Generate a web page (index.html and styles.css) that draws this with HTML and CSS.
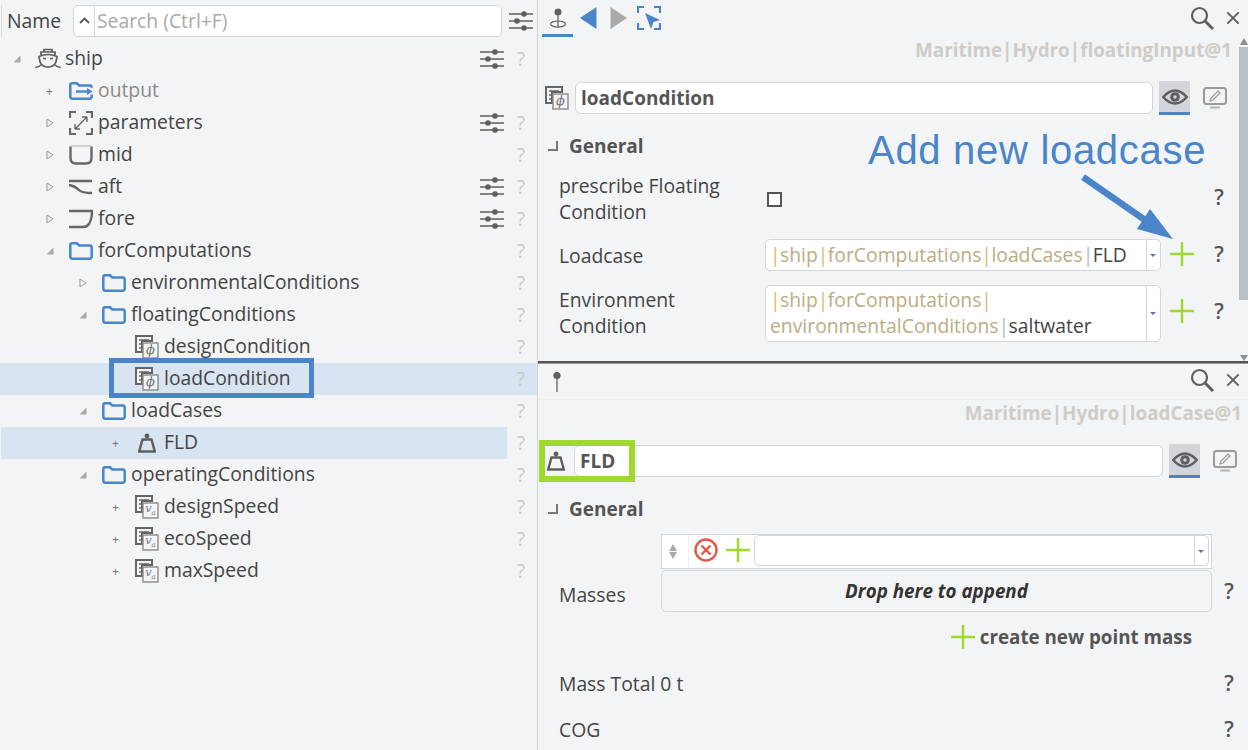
FILE: index.html
```html
<!DOCTYPE html>
<html lang="en">
<head>
<meta charset="utf-8">
<title>Load condition</title>
<link rel="stylesheet" href="styles.css">
</head>
<body>
<svg class="defs" width="0" height="0">
<defs>
<symbol id="sliders" viewBox="0 0 24 20"><g stroke="#5f5f5f" stroke-width="1.6"><path d="M0 3H24M0 10H24M0 17H24"/></g><circle cx="15" cy="3" r="2.8" fill="#5f5f5f"/><circle cx="8" cy="10" r="2.8" fill="#5f5f5f"/><circle cx="15" cy="17" r="2.8" fill="#5f5f5f"/></symbol>
<symbol id="folder" viewBox="0 0 24 18"><path d="M1.300 14.500V3q0-1.700 1.700-1.700h5l2.200 2.300h10.300q2.200 0 2.200 2.200v8.700q0 2.200-2.200 2.200H3.500q-2.200 0-2.200-2.200z" fill="none" stroke="#4a85c9" stroke-width="2.500"/></symbol>
<symbol id="doc" viewBox="0 0 24 24"><path d="M1 1H17V6H7V17H1z" fill="#f3f4f6" stroke="#666" stroke-width="2"/><path d="M4 5H14M4 9H7M4 13H7" stroke="#666" stroke-width="1.400"/><rect x="8" y="8" width="15" height="15" fill="#f3f4f6" stroke="#8a8a8a" stroke-width="1.400"/></symbol>
<symbol id="weight" viewBox="0 0 18 20"><circle cx="9" cy="3" r="2.400" fill="#5f5f5f"/><path d="M4.500 6.500H13.500L16.800 18.500H1.200z" fill="none" stroke="#5f5f5f" stroke-width="2.400"/></symbol>
<symbol id="tri-open" viewBox="0 0 8 8"><path d="M7.500 .5V7.500H.5z" fill="#a9a9a9"/></symbol>
<symbol id="tri-closed" viewBox="0 0 8 10"><path d="M1 1L7 5L1 9z" fill="#f3f4f6" stroke="#999"/></symbol>
<symbol id="plus" viewBox="0 0 24 24"><path d="M12 0V24M0 12H24" stroke="#a0d92e" stroke-width="2.400"/></symbol>
<symbol id="eye" viewBox="0 0 26 16"><path d="M1.200 8Q13-5 24.800 8Q13 21 1.200 8z" fill="none" stroke="#5f5f5f" stroke-width="2.600"/><circle cx="13" cy="8" r="4.800" fill="#5f5f5f"/><circle cx="13" cy="8" r="1.800" fill="#d2d5da"/></symbol>
<symbol id="editor" viewBox="0 0 24 22"><rect x="1" y="1" width="22" height="16" rx="2.500" fill="none" stroke="#9a9a9a" stroke-width="2"/><path d="M7 20.500H17" stroke="#b5b5b5" stroke-width="2"/><path d="M7 14L8 11L15 4L17 6L10 13z" fill="none" stroke="#9a9a9a" stroke-width="1.200"/></symbol>
<symbol id="lens" viewBox="0 0 24 24"><circle cx="9.500" cy="9.500" r="7.500" fill="none" stroke="#5f5f5f" stroke-width="2.200"/><path d="M15 15L23 23" stroke="#5f5f5f" stroke-width="3"/></symbol>
<symbol id="close" viewBox="0 0 16 16"><path d="M1.500 1.500L14.500 14.500M14.500 1.500L1.500 14.500" stroke="#5f5f5f" stroke-width="2.200"/></symbol>
</defs>
</svg>

<main class="app">
<section class="tree-panel">
  <header class="tree-head">
    <span class="head-name">Name</span>
    <div class="search"><span class="search-chev"><svg width="11" height="7" viewBox="0 0 11 7"><path d="M1 6L5.500 1.500L10 6" fill="none" stroke="#555" stroke-width="1.800"/></svg></span><span class="search-text">Search (Ctrl+F)</span></div>
    <svg class="ic-sliders"><use href="#sliders"/></svg>
  </header>
  <ul class="tree">
    <li class="row lv0"><span class="tog"><svg class="tri"><use href="#tri-open"/></svg></span><span class="ic ic-ship"><svg width="26" height="24" viewBox="0 0 26 24"><path d="M9 5V2.500H17V5M6 8V5H20V8M5 15L4 9.500Q13 5.500 22 9.500L21 15Q19 20 13 20Q7 20 5 15z" fill="none" stroke="#5f5f5f" stroke-width="1.700"/><path d="M0 20.500Q4 20 6 18M26 20.500Q22 20 20 18M8 11.500H11M15 11.500H18" fill="none" stroke="#5f5f5f" stroke-width="1.500"/></svg></span><span class="lbl">ship</span><span class="act"><svg class="ic-sliders"><use href="#sliders"/></svg></span><span class="q">?</span></li>
    <li class="row lv1"><span class="tog plus">+</span><span class="ic"><svg width="24" height="18" viewBox="0 0 24 18"><path d="M1.300 9V3q0-1.700 1.700-1.700h5l2.200 2.300h10.300q2.200 0 2.200 2.200M1.300 9V14.500q0 2.200 2.200 2.200h17q2.200 0 2.200-2.200v-2" fill="none" stroke="#4a85c9" stroke-width="2.500"/><path d="M7 9.500H20" stroke="#4a85c9" stroke-width="2.400"/><path d="M18 6L23.500 9.500L18 13z" fill="#4a85c9"/></svg></span><span class="lbl muted">output</span><span class="q blank"></span></li>
    <li class="row lv1"><span class="tog"><svg class="tri tri-c"><use href="#tri-closed"/></svg></span><span class="ic"><svg width="24" height="24" viewBox="0 0 24 24"><path d="M1 7V1H7M17 1H23V7M1 17V23H7M23 17V23H17" fill="none" stroke="#666" stroke-width="2.200"/><path d="M6 18L18 6M6 18V13M6 18H11M18 6V11M18 6H13" fill="none" stroke="#666" stroke-width="1.400"/></svg></span><span class="lbl">parameters</span><span class="act"><svg class="ic-sliders"><use href="#sliders"/></svg></span><span class="q">?</span></li>
    <li class="row lv1"><span class="tog"><svg class="tri tri-c"><use href="#tri-closed"/></svg></span><span class="ic"><svg width="24" height="20" viewBox="0 0 24 20"><path d="M1.500 1.500V13Q1.500 18.500 7 18.500H17Q22.500 18.500 22.500 13V1.500" fill="none" stroke="#666" stroke-width="2.400"/><path d="M1 1H23" stroke="#bbb" stroke-width="1.200"/></svg></span><span class="lbl">mid</span><span class="q">?</span></li>
    <li class="row lv1"><span class="tog"><svg class="tri tri-c"><use href="#tri-closed"/></svg></span><span class="ic"><svg width="24" height="16" viewBox="0 0 24 16"><path d="M0 2H23M0 6Q6 7 10 11Q13 14 23 14" fill="none" stroke="#666" stroke-width="2.400"/></svg></span><span class="lbl">aft</span><span class="act"><svg class="ic-sliders"><use href="#sliders"/></svg></span><span class="q">?</span></li>
    <li class="row lv1"><span class="tog"><svg class="tri tri-c"><use href="#tri-closed"/></svg></span><span class="ic"><svg width="24" height="20" viewBox="0 0 24 20"><path d="M0 2H23Q23 10 20 15Q18 18 14 18H0" fill="none" stroke="#666" stroke-width="2.400"/></svg></span><span class="lbl">fore</span><span class="act"><svg class="ic-sliders"><use href="#sliders"/></svg></span><span class="q">?</span></li>
    <li class="row lv1"><span class="tog"><svg class="tri"><use href="#tri-open"/></svg></span><span class="ic"><svg class="ic-folder"><use href="#folder"/></svg></span><span class="lbl">forComputations</span><span class="q">?</span></li>
    <li class="row lv2"><span class="tog"><svg class="tri tri-c"><use href="#tri-closed"/></svg></span><span class="ic"><svg class="ic-folder"><use href="#folder"/></svg></span><span class="lbl">environmentalConditions</span><span class="q">?</span></li>
    <li class="row lv2"><span class="tog"><svg class="tri"><use href="#tri-open"/></svg></span><span class="ic"><svg class="ic-folder"><use href="#folder"/></svg></span><span class="lbl">floatingConditions</span><span class="q">?</span></li>
    <li class="row lv3"><span class="tog"></span><span class="ic"><span class="doc"><svg class="ic-doc"><use href="#doc"/></svg><i class="doc-sym">ϕ</i></span></span><span class="lbl">designCondition</span><span class="q">?</span></li>
    <li class="row lv3 sel-wide"><span class="tog"></span><span class="ic"><span class="doc"><svg class="ic-doc"><use href="#doc"/></svg><i class="doc-sym">ϕ</i></span></span><span class="lbl">loadCondition</span><span class="q">?</span></li>
    <li class="row lv2"><span class="tog"><svg class="tri"><use href="#tri-open"/></svg></span><span class="ic"><svg class="ic-folder"><use href="#folder"/></svg></span><span class="lbl">loadCases</span><span class="q">?</span></li>
    <li class="row lv3 sel"><span class="tog plus">+</span><span class="ic"><svg class="ic-weight"><use href="#weight"/></svg></span><span class="lbl">FLD</span><span class="q">?</span></li>
    <li class="row lv2"><span class="tog"><svg class="tri"><use href="#tri-open"/></svg></span><span class="ic"><svg class="ic-folder"><use href="#folder"/></svg></span><span class="lbl">operatingConditions</span><span class="q">?</span></li>
    <li class="row lv3"><span class="tog plus">+</span><span class="ic"><span class="doc"><svg class="ic-doc"><use href="#doc"/></svg><i class="doc-sym small">v<sub>a</sub></i></span></span><span class="lbl">designSpeed</span><span class="q">?</span></li>
    <li class="row lv3"><span class="tog plus">+</span><span class="ic"><span class="doc"><svg class="ic-doc"><use href="#doc"/></svg><i class="doc-sym small">v<sub>a</sub></i></span></span><span class="lbl">ecoSpeed</span><span class="q">?</span></li>
    <li class="row lv3"><span class="tog plus">+</span><span class="ic"><span class="doc"><svg class="ic-doc"><use href="#doc"/></svg><i class="doc-sym small">v<sub>a</sub></i></span></span><span class="lbl">maxSpeed</span><span class="q">?</span></li>
  </ul>
  <div class="mark-blue"></div>
</section>

<section class="detail">
  <div class="pane pane-top">
    <header class="toolbar">
      <span class="tool pin on"><svg width="18" height="22" viewBox="0 0 18 22"><circle cx="9" cy="4" r="3.500" fill="#5f5f5f"/><path d="M9 7V20" stroke="#8a8a8a" stroke-width="1.800"/><ellipse cx="9" cy="16" rx="7.500" ry="3" fill="none" stroke="#5f5f5f" stroke-width="1.200"/></svg></span>
      <svg class="nav" width="17" height="22" viewBox="0 0 17 22"><path d="M16.500 0V22L0 11z" fill="#4a85c9"/></svg>
      <svg class="nav nav2" width="17" height="22" viewBox="0 0 17 22"><path d="M.5 0V22L17 11z" fill="#a9a9a9"/></svg>
      <svg class="nav nav3" width="24" height="24" viewBox="0 0 24 24"><path d="M1 7V1H7M17 1H23V7M1 17V23H7M23 17V23H17" fill="none" stroke="#4a85c9" stroke-width="2.200"/><path d="M8 7L23 14L16.500 16L14 23z" fill="#4a85c9"/></svg>
      <span class="grow"></span>
      <svg class="tool-lens"><use href="#lens"/></svg>
      <svg class="tool-close"><use href="#close"/></svg>
    </header>
    <div class="crumb c1">Maritime|Hydro|floatingInput@1</div>
    <div class="title-row">
      <span class="title-ic doc"><svg class="ic-doc"><use href="#doc"/></svg><i class="doc-sym">ϕ</i></span>
      <div class="title-input">loadCondition</div>
      <span class="view-btn"><svg class="ic-eye"><use href="#eye"/></svg></span>
      <svg class="ic-editor"><use href="#editor"/></svg>
    </div>
    <h2 class="group"><span class="group-tog"></span>General</h2>
    <div class="field f-prescribe">
      <span class="f-label">prescribe Floating Condition</span>
      <span class="f-body"><span class="check"></span></span>
      <span class="q2">?</span>
    </div>
    <div class="field f-loadcase">
      <span class="f-label">Loadcase</span>
      <span class="f-body">
        <span class="combo"><span class="combo-text"><b>|</b>ship<b>|</b>forComputations<b>|</b>loadCases<b class="end">|</b><em>FLD</em></span><span class="combo-arrow"></span></span>
        <svg class="ic-plus"><use href="#plus"/></svg>
      </span>
      <span class="q2">?</span>
    </div>
    <div class="field f-env">
      <span class="f-label">Environment Condition</span>
      <span class="f-body">
        <span class="combo tall"><span class="combo-text"><b>|</b>ship<b>|</b>forComputations<b>|</b> environmentalConditions<b class="end">|</b><em>saltwater</em></span><span class="combo-arrow"></span></span>
        <svg class="ic-plus"><use href="#plus"/></svg>
      </span>
      <span class="q2">?</span>
    </div>
    <div class="scrollbar"><span class="sb-up"></span><span class="sb-thumb"></span><span class="sb-down"></span></div>
  </div>
  <div class="splitter"></div>
  <div class="pane pane-bottom">
    <header class="toolbar tb2">
      <svg class="pin2" width="10" height="22" viewBox="0 0 10 22"><circle cx="5" cy="4.500" r="3.600" fill="#5f5f5f"/><path d="M5 8V21" stroke="#8a8a8a" stroke-width="1.800"/></svg>
      <span class="grow"></span>
      <svg class="tool-lens"><use href="#lens"/></svg>
      <svg class="tool-close"><use href="#close"/></svg>
    </header>
    <div class="crumb">Maritime|Hydro|loadCase@1</div>
    <div class="title-row tr2">
      <span class="title-ic"><svg class="ic-weight"><use href="#weight"/></svg></span>
      <div class="title-input">FLD</div>
      <span class="view-btn"><svg class="ic-eye"><use href="#eye"/></svg></span>
      <svg class="ic-editor"><use href="#editor"/></svg>
      <div class="mark-green"></div>
    </div>
    <h2 class="group g2"><span class="group-tog"></span>General</h2>
    <div class="field f-masses">
      <span class="f-label">Masses</span>
      <div class="masses">
        <div class="mass-bar">
          <span class="spin"><i class="up"></i><i class="down"></i></span>
          <svg class="ic-remove" viewBox="0 0 24 24"><circle cx="12" cy="12" r="10.500" fill="none" stroke="#e2574c" stroke-width="2.400"/><path d="M7.500 7.500L16.500 16.500M16.500 7.500L7.500 16.500" stroke="#e2574c" stroke-width="2.400"/></svg>
          <svg class="ic-plus"><use href="#plus"/></svg>
          <span class="mass-combo"><span class="combo-arrow"></span></span>
        </div>
        <div class="drop">Drop here to append</div>
      </div>
      <span class="q2">?</span>
    </div>
    <div class="create"><svg class="ic-plus"><use href="#plus"/></svg><span>create new point mass</span></div>
    <div class="field f-simple"><span class="f-wide">Mass Total 0 t</span><span class="q2">?</span></div>
    <div class="field f-simple f-cog"><span class="f-wide">COG</span><span class="q2">?</span></div>
  </div>
  <div class="note">Add new loadcase</div>
  <svg class="note-arrow" width="100" height="70" viewBox="0 0 100 70"><path d="M4 3L66 46" stroke="#4a85c9" stroke-width="6.500"/><path d="M94 65L58 55L71 35z" fill="#4a85c9"/></svg>
</section>
</main>
</body>
</html>
```
FILE: styles.css
```css
* { box-sizing: border-box; }
html, body { margin: 0; height: 100%; }
body { background: #f3f4f6; font-family: "Open Sans", "Noto Sans", sans-serif; font-size: 19.33px; color: #444; overflow: hidden; }
.defs { position: absolute; }
.app { display: flex; width: 1248px; height: 750px; }

.tree-panel { position: relative; width: 538px; flex: none; border-right: 1px solid #cfd2d6; }
.tree-head { display: flex; align-items: center; height: 43px; padding: 2px 4px 4px 1px; }
.head-name { width: 72px; height: 32px; line-height: 31px; padding-left: 5px; border-left: 1px solid #d8dadd; color: #444; flex: none; }
.search { flex: none; width: 429px; height: 32px; display: flex; background: #fff; border: 1px solid #d2d5d9; border-radius: 5px; margin-right: 7px; }
.search-chev { width: 21px; display: flex; align-items: center; justify-content: center; border-right: 1px solid #d2d5d9; }
.search-text { color: #a9a9a9; padding-left: 2px; line-height: 29px; }
.ic-sliders { width: 24px; height: 20px; display: block; flex: none; }

.tree { list-style: none; margin: 0; padding: 0; }
.row { display: flex; align-items: center; height: 32px; padding-right: 5px; white-space: nowrap; }
.lv0 { padding-left: 8px; }
.lv1 { padding-left: 41px; }
.lv2 { padding-left: 74px; }
.lv3 { padding-left: 107px; }
.tog { width: 17px; height: 32px; display: flex; align-items: center; justify-content: center; flex: none; color: #777; font-size: 12px; margin-right: 11px; }
.lv0 .tog { margin-right: 10px; }
.tri { width: 8px; height: 8px; }
.tri-c { height: 10px; }
.ic { width: 24px; height: 32px; display: flex; align-items: center; justify-content: center; flex: none; margin-right: 5px; }
.ic-folder { width: 24px; height: 18px; display: block; }
.ic-ship { width: 26px; margin-right: 4px; }
.lbl { flex: 1; color: #444; line-height: 30px; margin-top: -2px; }
.muted { color: #8a8a8a; }
.act { margin-right: 6px; display: flex; }
.q { width: 22px; text-align: center; color: #c8c8c8; font-size: 19.33px; flex: none; margin-top: -2px; }
.blank { height: 1px; }
.sel { background: #d8e4f1; margin-left: 1px; padding-left: 106px; margin-right: 30px; padding-right: 0; position: relative; }
.sel .q { position: absolute; left: 509px; }
.sel-wide { background: #d8e4f1; }
.doc { position: relative; display: block; width: 24px; height: 24px; flex: none; }
.ic-doc { width: 24px; height: 24px; display: block; }
.doc-sym { position: absolute; left: 8px; top: 8px; width: 15px; height: 15px; line-height: 14px; text-align: center; font-family: "DejaVu Serif", serif; font-size: 13px; color: #777; }
.doc-sym.small { font-size: 11px; line-height: 12px; }
.doc-sym sub { font-size: 7px; line-height: 0; }
.ic-weight { width: 18px; height: 20px; display: block; }
.mark-blue { position: absolute; left: 109px; top: 358px; width: 205px; height: 40px; border: 5px solid #4a85c9; pointer-events: none; }

.detail { position: relative; flex: 1; display: flex; flex-direction: column; min-width: 0; }
.pane { position: relative; overflow: hidden; }
.pane-top { height: 361px; flex: none; }
.pane-bottom { flex: 1; }
.splitter { height: 3px; background: #555; flex: none; border-bottom: 1px solid #999; }
.toolbar { display: flex; align-items: flex-start; height: 37px; padding: 2px 8px 0 4px; }
.tool.pin { width: 31px; height: 35px; border-bottom: 3px solid #4a85c9; display: flex; justify-content: center; padding-top: 6px; margin-right: 5px; }
.nav { margin: 5px 0 0 2px; }
.nav2 { margin-left: 13px; }
.nav3 { margin: 4px 0 0 10px; }
.grow { flex: 1; }
.tool-lens { width: 24px; height: 24px; margin: 4px 12px 0 0; }
.tool-close { width: 14px; height: 14px; margin: 9px 0 0 0; }
.tb2 .tool-lens { margin-top: 2px; }
.tb2 .tool-close { margin-top: 7px; }
.crumb { text-align: right; color: #cfccc8; font-weight: 700; font-size: 18.850px; line-height: 26px; height: 24px; padding-right: 6px; white-space: nowrap; }
.c1 { padding-right: 16px; }
.title-row { position: relative; display: flex; align-items: center; height: 34px; margin-top: 20px; padding-left: 7px; }
.title-ic { width: 24px; height: 24px; margin-right: 6px; flex: none; }
.title-input { flex: none; width: 578px; height: 32px; background: #fff; border: 1px solid #d2d5d9; border-radius: 6px; padding-left: 5px; font-weight: 700; font-size: 19px; line-height: 30px; color: #555; }
.view-btn { width: 31px; height: 34px; margin-left: 6px; background: #d2d5da; border-bottom: 3px solid #4a85c9; display: flex; align-items: center; justify-content: center; flex: none; }
.ic-eye { width: 26px; height: 16px; }
.ic-editor { width: 24px; height: 22px; margin-left: 13px; flex: none; }
.group { display: flex; align-items: center; margin: 16px 0 0; height: 30px; font-size: 19px; font-weight: 700; color: #555; padding-left: 10px; }
.group-tog { width: 10px; height: 10px; border-right: 2px solid #777; border-bottom: 2px solid #777; margin-right: 11px; }

.field { display: flex; align-items: center; padding-left: 21px; }
.f-label { width: 206px; flex: none; line-height: 26px; color: #444; padding-right: 20px; }
.f-body { flex: 1; display: flex; align-items: center; min-width: 0; }
.q2 { width: 24px; flex: none; text-align: center; color: #555; font-size: 21px; font-weight: 600; margin: 0 7px 2px 0; line-height: 28px; }
.pane-top .q2 { margin-right: 17px; }
.f-prescribe { height: 52px; margin-top: 14px; }
.f-prescribe .q2 { margin-bottom: 8px; }
.f-prescribe .f-label { margin-top: -4px; }
.f-loadcase .f-label { padding-top: 2px; }
.f-loadcase .ic-plus { margin-bottom: 2px; }
.f-env .ic-plus { margin-bottom: 4px; }
.f-env .q2 { margin-bottom: 4px; }
.check { width: 15px; height: 15px; border: 2px solid #555; background: #fff; display: block; margin-left: 2px; margin-top: -4px; }
.f-loadcase { height: 32px; margin-top: 12px; }
.f-env { height: 58px; margin-top: 13px; }
.combo { position: relative; width: 396px; height: 32px; flex: none; background: #fff; border: 1px solid #d2d5d9; border-radius: 5px; padding: 0 20px 0 4px; line-height: 30px; color: #444; display: block; }
.combo.tall { height: 57px; line-height: 26px; padding-top: 1px; }
.combo-text { display: block; color: #b9ad84; white-space: normal; }
.combo-text b { font-weight: 400; color: #d9bb6e; letter-spacing: -.6px; }
.combo-text b.end { color: #a9bdd0; }
.combo-text em { font-style: normal; color: #444; }
.combo-arrow { position: absolute; right: 0; top: 0; bottom: 0; width: 14px; border-left: 1px solid #d2d5d9; }
.combo-arrow::after { content: ""; position: absolute; left: 3px; top: 50%; margin-top: -1px; border: 3px solid transparent; border-top: 3px solid #5a6fb8; border-bottom: 0; }
.ic-plus { width: 24px; height: 24px; flex: none; display: block; margin-left: 9px; }

.scrollbar { position: absolute; right: 0; top: 38px; bottom: 0; width: 9px; display: flex; flex-direction: column; align-items: center; }
.sb-up { border: 4px solid transparent; border-bottom: 7px solid #8f8f8f; border-top: 0; }
.sb-thumb { width: 9px; height: 253px; background: #babfc5; margin-top: 2px; }
.sb-down { margin-top: auto; border: 4px solid transparent; border-top: 6px solid #8f8f8f; border-bottom: 0; }

.tb2 { padding: 2px 8px 0 14px; border-bottom: 1px solid #eceef0; height: 36px; }
.pin2 { margin-top: 5px; }
.tr2 { padding-left: 8px; }
.tr2 .title-ic { width: 20px; height: 20px; margin-right: 8px; display: flex; justify-content: center; }
.tr2 .title-input { width: 589px; }
.mark-green { position: absolute; left: 1px; top: -4px; width: 96px; height: 42px; border: 6px solid #a0d92e; pointer-events: none; }
.g2 { margin-top: 16px; }
.f-masses { margin-top: 10px; height: 78px; padding-left: 21px; }
.f-masses .f-label { width: 102px; padding: 43px 0 0; }
.f-masses .q2 { padding-top: 38px; margin-left: 5px; line-height: 28px; }
.masses { width: 551px; flex: none; }
.mass-bar { display: flex; align-items: center; height: 35px; background: #fff; border: 1px solid #d2d5d9; }
.spin { width: 27px; height: 100%; display: flex; flex-direction: column; align-items: center; justify-content: center; gap: 1px; border-right: 1px solid #eee; flex: none; padding-right: 4px; }
.spin i { display: block; border: 4px solid transparent; }
.spin .up { border-bottom: 7px solid #a9a9a9; border-top: 0; }
.spin .down { border-top: 7px solid #a9a9a9; border-bottom: 0; }
.ic-remove { width: 24px; height: 24px; margin: 0 0 3px 5px; flex: none; }
.mass-bar .ic-plus { margin: 0 0 3px 8px; }
.mass-combo { position: relative; flex: 1; height: 31px; margin: 0 2px 2px 4px; border: 1px solid #d2d5d9; border-radius: 5px; background: #fff; display: block; }
.drop { height: 42px; margin-top: 1px; border: 1px solid #d2d5d9; border-radius: 5px; text-align: center; font-weight: 700; font-style: italic; font-size: 18.800px; line-height: 40px; color: #333; }
.create { display: flex; align-items: center; justify-content: flex-end; height: 30px; margin-top: 10px; padding-right: 56px; font-weight: 700; font-size: 18.800px; color: #555; }
.create .ic-plus { margin: 0 5px 0 0; }
.f-simple { height: 30px; margin-top: 17px; justify-content: space-between; }
.f-cog { margin-top: 16px; }
.f-wide { line-height: 30px; color: #444; }
.note { position: absolute; left: 330px; top: 125px; font-family: "Liberation Sans", Arial, sans-serif; font-size: 40px; line-height: 50px; color: #4a85c9; white-space: nowrap; letter-spacing: .7px; }
.note-arrow { position: absolute; left: 541px; top: 174px; }
```
